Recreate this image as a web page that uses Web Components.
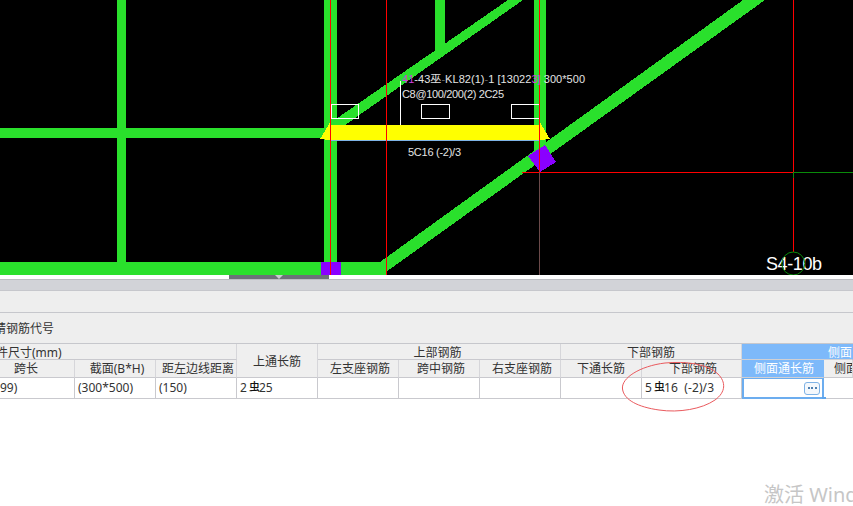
<!DOCTYPE html>
<html lang="zh"><head><meta charset="utf-8"><title>钢筋平法表格</title>
<style>
html,body{margin:0;padding:0;background:#fff;width:853px;height:506px;overflow:hidden}
body{font:12px/16px "Noto Sans","Noto Sans CJK SC",sans-serif;color:#333;position:relative}
</style></head><body>
<cad-canvas></cad-canvas>
<split-handle></split-handle>
<tool-band height="10"></tool-band>
<tool-band height="21"></tool-band>
<tool-band height="30"><span style="margin:2px 0 0 -6px">精钢筋代号</span></tool-band>
<rebar-table>
  <grid-cell kind="head" style="grid-column:1/4;padding-top:2px" indent="-4">件尺寸(mm)</grid-cell>
  <grid-cell kind="head" style="grid-column:4;grid-row:1/3;padding-top:3px">上通长筋</grid-cell>
  <grid-cell kind="head" style="grid-column:5/8;padding-top:2px;padding-right:3px">上部钢筋</grid-cell>
  <grid-cell kind="head" style="grid-column:8/10;padding-top:2px">下部钢筋</grid-cell>
  <grid-cell kind="blue" style="grid-column:10/12;padding-top:2px" align="left" indent="86">侧面</grid-cell>

  <grid-cell kind="head" style="padding-right:22px;grid-row:2;grid-column:1;padding-top:1px">跨长</grid-cell>
  <grid-cell kind="head" style="grid-row:2;grid-column:2;padding:1px 0 0 4px">截面(B*H)</grid-cell>
  <grid-cell kind="head" style="grid-row:2;grid-column:3;padding:1px 0 0 4px">距左边线距离</grid-cell>
  <grid-cell kind="head" style="grid-row:2;grid-column:5;padding:1px 0 0 4px">左支座钢筋</grid-cell>
  <grid-cell kind="head" style="grid-row:2;grid-column:6;padding:1px 0 0 4px">跨中钢筋</grid-cell>
  <grid-cell kind="head" style="grid-row:2;grid-column:7;padding:1px 0 0 4px">右支座钢筋</grid-cell>
  <grid-cell kind="head" style="grid-row:2;grid-column:8;padding-top:1px">下通长筋</grid-cell>
  <grid-cell kind="head" style="grid-row:2;grid-column:9;padding:1px 0 0 3px">下部钢筋</grid-cell>
  <grid-cell kind="blue" style="grid-row:2;grid-column:10;padding:1px 0 0 3px">侧面通长筋</grid-cell>
  <grid-cell kind="head" style="grid-row:2;grid-column:11;padding-top:1px" align="left" indent="10">侧面</grid-cell>

  <grid-cell kind="data" indent="0">99)</grid-cell>
  <grid-cell kind="data">(300*500)</grid-cell>
  <grid-cell kind="data">(150)</grid-cell>
  <grid-cell kind="data"><span>2 <rebar-mark></rebar-mark>25</span></grid-cell>
  <grid-cell kind="data"></grid-cell>
  <grid-cell kind="data"></grid-cell>
  <grid-cell kind="data"></grid-cell>
  <grid-cell kind="data"></grid-cell>
  <grid-cell kind="data"><span>5 <rebar-mark></rebar-mark><span style="word-spacing:3px;letter-spacing:.12px">16 (-2)/3</span></span></grid-cell>
  <selected-cell></selected-cell>
  <grid-cell kind="data" style="border-right:0"></grid-cell>
</rebar-table>
<hand-ellipse></hand-ellipse>
<activate-mark>激活 Windows</activate-mark>
<script>
function reg(name, css, html, extra){
  customElements.define(name, class extends HTMLElement{
    constructor(){super();const r=this.attachShadow({mode:'open'});
      r.innerHTML='<style>'+css+'</style>'+html;}
    connectedCallback(){ if(extra) extra(this); }
  });
}
const G='#2ae02c';
reg('cad-canvas',':host{display:block;height:275px;background:#000}svg{display:block}text{font-family:"Liberation Sans","Noto Sans CJK SC",sans-serif;font-size:11px;fill:#e4e4e4}',`
<svg width="853" height="275" viewBox="0 0 853 275">
 <g shape-rendering="crispEdges">
  <g fill="${G}">
   <rect x="0" y="128" width="330" height="10"/>
   <rect x="117" y="0" width="9" height="265"/>
   <rect x="0" y="262" width="382" height="13"/>
   <rect x="324" y="0" width="13" height="265"/>
   <rect x="435" y="0" width="10" height="52"/>
   <rect x="534" y="0" width="12" height="158"/>
   <polygon points="508,0 523,0 338,130 320,130"/>
   <polygon points="743,0 765,0 386,272 386,275 381,275 380,262"/>
  </g>
  <rect x="321" y="262" width="20" height="13" fill="#8a00ff"/>
  <polygon points="528,156 545,145 556,162 540,172" fill="#8a00ff"/>
  <polygon points="320,139 331,121 331,125 539,125 539,121 550,139 540,140 330,140" fill="#ffff00"/>
  <rect x="330" y="139.500" width="210" height="1.500" fill="#7fb4e6"/>
  <g fill="none" stroke="#fff">
   <rect x="331.500" y="104.500" width="27" height="14"/>
   <rect x="421.500" y="104.500" width="28" height="14"/>
   <rect x="511.500" y="104.500" width="28" height="14"/>
   <path d="M400.500 81V125"/>
  </g>
  <g stroke="#f00" fill="none">
   <path d="M330.500 0V275M386.500 0V275M539.500 0V172M793.500 0V252M522 172.500H793"/>
   <path d="M539.500 172V275" stroke="#6b4a4a"/>
  </g>
  <path d="M793 172.500H853M793.500 172V178" stroke="#0a8a0a"/>
 </g>
 <text x="402" y="83" textLength="183" lengthAdjust="spacing"><tspan fill="#d040e0">41</tspan>-43巫<tspan fill="#666">-</tspan>KL82(1)<tspan fill="#666">-</tspan>1 [13022<tspan fill="#d040e0">3]</tspan> 300*500</text>
 <text x="402" y="98" textLength="102" lengthAdjust="spacing">C8@100/200(2) 2C25</text>
 <text x="408" y="156" textLength="53" lengthAdjust="spacing">5C16 (-2)/3</text>
 <text x="766" y="270" style="font-size:18px;fill:#fff" textLength="56" lengthAdjust="spacing">S4-10b</text>
 <circle cx="793.300" cy="263.500" r="11.500" fill="none" stroke="#0a8a0a" stroke-width="1"/>
</svg>`);
reg('split-handle',':host{display:block;height:4px;background:#fff;border-bottom:1px solid #bcbdc2;box-sizing:content-box}div{width:100px;height:4px;margin-left:229px;background:#6c7278;display:flex;justify-content:center}svg{display:block}','<div><svg width="10" height="4"><path d="M1 0H9L5 4Z" fill="#c9cbcf"/></svg></div>');
reg('tool-band',':host{display:flex;align-items:center;box-sizing:content-box;background:#eeeeee;border-bottom:1px solid #c6c7cc}','<slot></slot>',el=>{
  const h=+el.getAttribute('height');el.style.height=h+'px';
  if(h===10) el.style.background='#d2d3d8';
});
reg('rebar-table',':host{display:block;width:853px;overflow:hidden}div{display:grid;grid-template-columns:75px repeat(7,81px) 100px 82px 29px;grid-template-rows:16px 18px 21px}','<div><slot></slot></div>');
reg('grid-cell',`:host{display:flex;align-items:center;box-sizing:border-box;min-width:0;white-space:nowrap;overflow:hidden;border-right:1px solid #c9c9ce;border-bottom:1px solid #c9c9ce}
:host([kind=head]){background:#efefef;justify-content:center;border-right-color:#d6d6da;color:#333}
:host([kind=blue]){background:#7db9fa;color:#fff;justify-content:center;border-right-color:#7db9fa;border-bottom-color:#d0d0d4}
:host([kind=data]){background:#fff;padding-left:3px;color:#333}
:host([align=left]){justify-content:flex-start}`,'<slot></slot>',el=>{
  const i=el.getAttribute('indent');
  if(i!==null) el.style.paddingLeft=Math.max(+i,0)+'px';
  if(+i<0){const s=el.shadowRoot.querySelector('slot');s.style.cssText='display:block;margin-left:'+i+'px';el.style.justifyContent='flex-start';}
});
reg('rebar-mark',':host{display:inline-block;font:500 11px/10px "Noto Sans CJK SC",sans-serif;color:#111;vertical-align:1.500px;width:9px;text-align:center}span{display:inline-block;margin:0 -1px}','<span>虫</span>');
reg('selected-cell',`:host{display:flex;align-items:center;justify-content:flex-end;box-sizing:border-box;position:relative;background:#fff;border:2px solid #6cadef;border-top-width:1px;padding-right:0;height:21px}
i{position:absolute;right:-4px;bottom:-4px;width:4px;height:4px;background:#5ea5ec}
b{display:flex;width:16px;height:13px;margin-right:2px;box-sizing:border-box;border:1px solid #7fb3e6;border-radius:3px;background:#f4f8fc;align-items:center;justify-content:center;gap:1.500px}
u{display:block;width:2px;height:2px;background:#4f7fae}`,'<b><u></u><u></u><u></u></b><i></i>');
reg('hand-ellipse',':host{position:absolute;left:618px;top:358px;width:112px;height:58px;pointer-events:none}svg{display:block}',
 '<svg width="112" height="58" viewBox="0 0 112 58"><path d="M4.500 31C3 20 22 8 47 5C68 3 90 6 100 16C108 24 108 34 97 42C84 51 61 55 41 52C20 49 6 42 4.500 31Z" fill="none" stroke="#ea5a5e" stroke-width="1"/></svg>');
reg('activate-mark',':host{position:absolute;left:764px;top:480px;white-space:nowrap;font:20px/30px "Noto Sans","Noto Sans CJK SC",sans-serif;color:#c6c6c6}','<slot></slot>');
</script>
</body></html>
